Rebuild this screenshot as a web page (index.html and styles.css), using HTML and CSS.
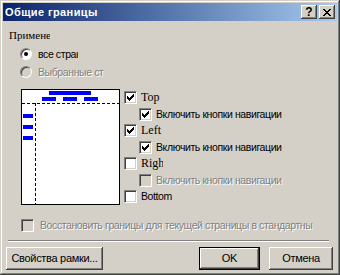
FILE: index.html
```html
<!DOCTYPE html>
<html lang="ru">
<head>
    <meta charset="UTF-8">
    <title>Общие границы</title>
    <link rel="stylesheet" href="styles.css">
</head>
<body>

<div class="window">
    <div class="titlebar">
        <span class="title">Общие границы</span>
        <div class="title-buttons">
            <div class="tbtn help">?</div>
            <div class="tbtn close">
                <svg width="8" height="7" viewBox="0 0 8 7" shape-rendering="crispEdges">
                    <path d="M0 0h2v1h-2zM6 0h2v1h-2zM1 1h2v1h-2zM5 1h2v1h-2zM2 2h4v1h-4zM3 3h2v1h-2zM2 4h4v1h-4zM1 5h2v1h-2zM5 5h2v1h-2zM0 6h2v1h-2zM6 6h2v1h-2z" fill="#000"/>
                </svg>
            </div>
        </div>
    </div>

    <div class="content">
        <div class="label serif">Применение</div>

        <div class="radio-row">
            <span class="radio checked"></span>
            <span class="text clip w40">все страницы</span>
        </div>
        <div class="radio-row disabled">
            <span class="radio"></span>
            <span class="text clip w66">Выбранные страницы</span>
        </div>

        <div class="main">
            <div class="preview">
                <div class="bar top-bar"></div>
                <div class="bar small b1"></div>
                <div class="bar small b2"></div>
                <div class="bar small b3"></div>
                <div class="dash-h"></div>
                <div class="dash-v"></div>
                <div class="bar side s1"></div>
                <div class="bar side s2"></div>
                <div class="bar side s3"></div>
            </div>

            <div class="options">
                <div class="check-row">
                    <span class="box checked"></span>
                    <span class="text serif">Top</span>
                </div>
                <div class="check-row sub">
                    <span class="box checked"></span>
                    <span class="text">Включить кнопки навигации</span>
                </div>
                <div class="check-row">
                    <span class="box checked"></span>
                    <span class="text serif">Left</span>
                </div>
                <div class="check-row sub">
                    <span class="box checked"></span>
                    <span class="text">Включить кнопки навигации</span>
                </div>
                <div class="check-row">
                    <span class="box"></span>
                    <span class="text serif clip w22">Right</span>
                </div>
                <div class="check-row sub disabled">
                    <span class="box"></span>
                    <span class="text">Включить кнопки навигации</span>
                </div>
                <div class="check-row">
                    <span class="box"></span>
                    <span class="text clip w36">Bottom</span>
                </div>
            </div>
        </div>

        <div class="check-row reset disabled">
            <span class="box"></span>
            <span class="text clip w273">Восстановить границы для текущей страницы в стандартный вид</span>
        </div>

        <div class="separator"></div>

        <div class="button-row">
            <div class="btn props">Свойства рамки...</div>
            <div class="spacer"></div>
            <div class="btn default">OK</div>
            <div class="btn cancel">Отмена</div>
        </div>
    </div>
</div>

</body>
</html>
```

FILE: styles.css
```css
body {
    margin: 0;
    background-color: #d4d0c8;
    font-family: 'Liberation Sans', sans-serif;
    font-size: 10.5px;
    letter-spacing: -0.4px;
    color: #000000;
}
.window {
    width: 340px;
    height: 275px;
    box-sizing: border-box;
    padding: 3px;
    background-color: #d4d0c8;
    box-shadow: inset -1px -1px #404040, inset 1px 1px #d4d0c8, inset -2px -2px #808080, inset 2px 2px #ffffff;
}
.titlebar {
    height: 18px;
    display: flex;
    align-items: center;
    justify-content: space-between;
    background: linear-gradient(to right, #0a246a, #a6caf0);
}
.title {
    font-weight: bold;
    font-size: 11px;
    letter-spacing: 0.4px;
    color: #ffffff;
    padding-left: 2px;
}
.title-buttons {
    display: flex;
    gap: 2px;
    margin-right: 2px;
}
.tbtn {
    width: 16px;
    height: 14px;
    display: flex;
    align-items: center;
    justify-content: center;
    background-color: #d4d0c8;
    box-shadow: inset -1px -1px #404040, inset 1px 1px #ffffff, inset -2px -2px #808080, inset 2px 2px #d4d0c8;
}
.tbtn.help {
    font-weight: bold;
    font-size: 12px;
    line-height: 14px;
    letter-spacing: 0;
}
.content {
    display: flex;
    flex-direction: column;
}
.serif {
    font-family: 'Liberation Serif', serif;
    font-size: 12px;
    letter-spacing: 0;
}
.clip {
    overflow: hidden;
    white-space: nowrap;
}
.w22 { width: 22px; }
.w36 { width: 36px; }
.w40 { width: 40px; }
.w66 { width: 66px; }
.w273 { width: 273px; }
.label {
    margin: 8px 0 0 6px;
    width: 41px;
    height: 13px;
    line-height: 13px;
    font-size: 11px;
    overflow: hidden;
    white-space: nowrap;
}
.radio-row {
    display: flex;
    align-items: center;
    height: 13px;
    margin-left: 17px;
    margin-top: 5px;
}
.radio {
    width: 12px;
    height: 12px;
    box-sizing: border-box;
    border-radius: 50%;
    border: 1px solid;
    border-color: #808080 #ffffff #ffffff #808080;
    background-color: #ffffff;
    box-shadow: inset 1px 1px #404040;
    display: flex;
    align-items: center;
    justify-content: center;
    margin-right: 6px;
}
.radio.checked::after {
    content: '';
    width: 4px;
    height: 4px;
    border-radius: 50%;
    background-color: #000000;
}
.disabled .radio,
.disabled .box {
    background-color: #d4d0c8;
}
.disabled .text {
    color: #808080;
    text-shadow: 1px 1px #ffffff;
}
.main {
    display: flex;
    margin: 11px 0 0 18px;
}
.preview {
    position: relative;
    width: 99px;
    height: 116px;
    box-sizing: border-box;
    border: 1px solid #000000;
    background-color: #ffffff;
}
.bar {
    position: absolute;
    height: 4px;
    background-color: #0000ff;
}
.top-bar { left: 27px; top: 1px; width: 42px; }
.small { top: 7px; width: 14px; }
.b1 { left: 20px; }
.b2 { left: 41px; }
.b3 { left: 62px; }
.side { left: 1px; width: 10px; }
.s1 { top: 24px; }
.s2 { top: 35px; }
.s3 { top: 46px; }
.dash-h {
    position: absolute;
    left: 0;
    right: 0;
    top: 13px;
    height: 1px;
    background: repeating-linear-gradient(to right, #000000 0 3px, transparent 3px 5px);
}
.dash-v {
    position: absolute;
    left: 13px;
    top: 13px;
    bottom: 0;
    width: 1px;
    background: repeating-linear-gradient(to bottom, #000000 0 3px, transparent 3px 5px);
}
.options {
    margin-left: 4px;
    padding-top: 2px;
}
.check-row {
    display: flex;
    align-items: flex-start;
    height: 16.5px;
}
.check-row.sub {
    margin-left: 15px;
}
.check-row .text {
    line-height: 13px;
}
.box {
    width: 13px;
    height: 13px;
    box-sizing: border-box;
    flex-shrink: 0;
    border: 1px solid;
    border-color: #808080 #ffffff #ffffff #808080;
    background-color: #ffffff;
    box-shadow: inset 1px 1px #404040, inset -1px -1px #d4d0c8;
    margin-right: 4px;
    display: flex;
    align-items: center;
    justify-content: center;
}
.box.checked::after {
    content: '';
    width: 7px;
    height: 7px;
    background: url("data:image/svg+xml;utf8,<svg xmlns='http://www.w3.org/2000/svg' width='7' height='7' shape-rendering='crispEdges'><path d='M6 0h1v3h-1zM5 1h1v3h-1zM4 2h1v3h-1zM3 3h1v3h-1zM2 4h1v3h-1zM1 3h1v3h-1zM0 2h1v3h-1z' fill='black'/></svg>");
}
.check-row.reset {
    margin: 12px 0 0 18px;
    height: 13px;
}
.reset .box {
    margin-right: 6px;
}
.separator {
    margin: 8px 0 0 5px;
    width: 321px;
    height: 1px;
    background-color: #808080;
    border-bottom: 1px solid #ffffff;
}
.button-row {
    display: flex;
    margin: 5px 4px 0 3px;
}
.spacer {
    flex: 1;
}
.btn {
    height: 23px;
    box-sizing: border-box;
    display: flex;
    align-items: center;
    justify-content: center;
    font-size: 11px;
    letter-spacing: -0.3px;
    background-color: #d4d0c8;
    box-shadow: inset -1px -1px #404040, inset 1px 1px #ffffff, inset -2px -2px #808080, inset 2px 2px #d4d0c8;
}
.btn.props {
    width: 97px;
}
.btn.default {
    width: 61px;
    border: 1px solid #000000;
    margin-right: 9px;
}
.btn.cancel {
    width: 64px;
}
```
